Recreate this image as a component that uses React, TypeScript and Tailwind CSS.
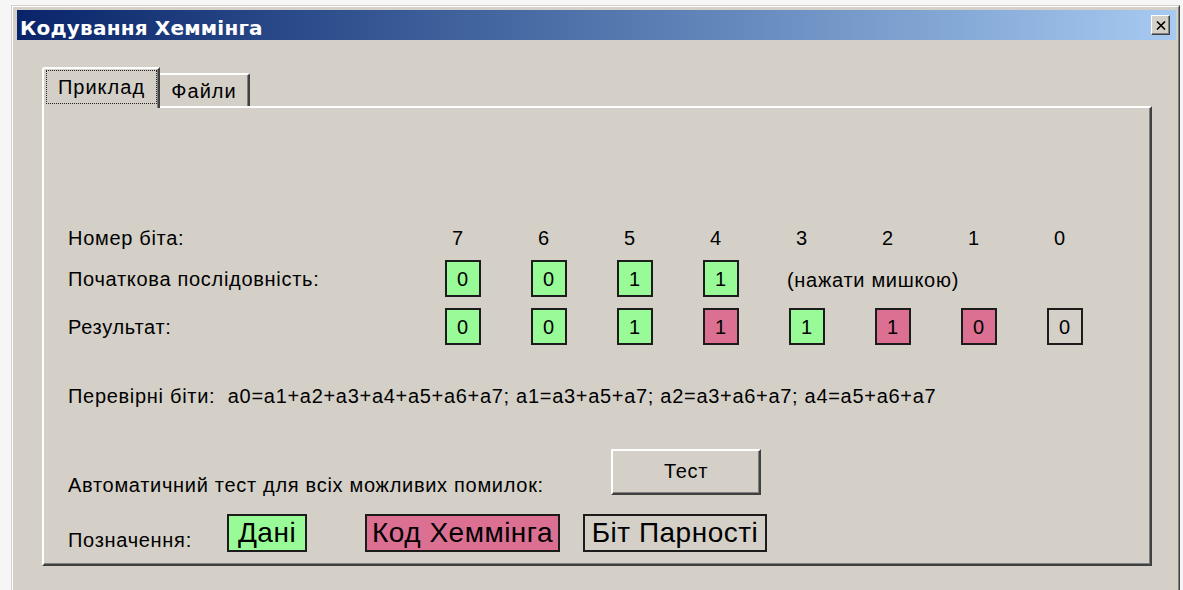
import React from "react";

type Tone = "data" | "code" | "parity";

interface Bit {
  v: string;
  tone: Tone;
}

const toneClass: Record<Tone, string> = {
  data: "bg-[#98fb98]",
  code: "bg-[#db7093]",
  parity: "bg-transparent",
};

const bitNumbers = ["7", "6", "5", "4", "3", "2", "1", "0"];

const source: Bit[] = [
  { v: "0", tone: "data" },
  { v: "0", tone: "data" },
  { v: "1", tone: "data" },
  { v: "1", tone: "data" },
];

const result: Bit[] = [
  { v: "0", tone: "data" },
  { v: "0", tone: "data" },
  { v: "1", tone: "data" },
  { v: "1", tone: "code" },
  { v: "1", tone: "data" },
  { v: "1", tone: "code" },
  { v: "0", tone: "code" },
  { v: "0", tone: "parity" },
];

const Cell = ({ bit }: { bit: Bit }) => (
  <div
    className={`w-[36px] h-[37px] border-2 border-[#1c1c1c] flex items-center justify-center text-[20px] leading-none ${toneClass[bit.tone]}`}
  >
    {bit.v}
  </div>
);

const CloseButton = () => (
  <div className="w-[19px] h-[20px] bg-[#d4d0c8] border border-t-white border-l-white border-r-[#404040] border-b-[#404040] shadow-[inset_-1px_-1px_0_#808080] flex items-center justify-center">
    <svg width="10" height="9" viewBox="0 0 10 9">
      <path d="M1 0.5 L9 8.5 M9 0.5 L1 8.5" stroke="#000" strokeWidth="1.6" />
    </svg>
  </div>
);

export default function App() {
  return (
    <div className="w-[1183px] h-[590px] bg-[#f6f6f6] pt-[5px] pl-[11px] overflow-hidden font-['Liberation_Sans',Arial,sans-serif] text-black tracking-[0.7px]">
      <div className="w-[1169px] h-[585px] bg-[#d4d0c8] border border-t-[#d4d0c8] border-l-[#d4d0c8] border-r-[#404040] border-b-0">
        <div className="h-full border-t border-l border-t-white border-l-white border-r border-r-[#808080] pl-[4px] pr-[2px] pt-[3px] flex flex-col">
          {/* caption bar */}
          <div className="h-[30px] bg-gradient-to-r from-[#0a246a] to-[#a6caf0] flex items-center justify-between pl-[3px] pr-[6px]">
            <span className="pt-[6px] text-white font-['DejaVu_Sans',sans-serif] font-bold text-[20px] tracking-[0.2px] leading-none">
              Кодування Хеммінга
            </span>
            <CloseButton />
          </div>

          {/* tabs */}
          <div className="ml-[25px] mt-[27px] h-[41px] -mb-[2px] flex items-end relative z-10">
            <div className="w-[118px] h-[41px] bg-[#d4d0c8] border-t-2 border-l-2 border-t-white border-l-white border-r-2 border-r-[#404040] shadow-[inset_-1px_0_0_#808080] rounded-tl-[3px] pt-[1px] pl-[2px] pr-[1px] pb-[4px]">
              <div className="h-full border border-dotted border-[#222] flex items-center justify-center text-[20px] leading-none tracking-[1px]">
                Приклад
              </div>
            </div>
            <div className="w-[90px] h-[33px] mb-[2px] border-t-2 border-t-white border-r-2 border-r-[#404040] shadow-[inset_-1px_0_0_#808080] rounded-tr-[2px] flex items-center justify-center text-[20px] leading-none tracking-[1px]">
              Файли
            </div>
          </div>

          {/* page */}
          <div className="ml-[25px] w-[1110px] h-[460px] border-2 border-t-white border-l-white border-r-[#404040] border-b-[#404040] shadow-[inset_-1px_-1px_0_#808080] pl-[24px] pt-[118px] flex flex-col text-[20px]">
            <div className="grid grid-cols-[377px_repeat(8,86px)] h-[24px] items-center leading-[24px]">
              <span>Номер біта:</span>
              {bitNumbers.map((n) => (
                <span key={n} className="pl-[7px]">
                  {n}
                </span>
              ))}
            </div>

            <div className="grid grid-cols-[377px_repeat(8,86px)] h-[37px] mt-[10px] items-center leading-[24px]">
              <span>Початкова послідовність:</span>
              {source.map((b, i) => (
                <Cell key={i} bit={b} />
              ))}
              <span className="col-span-4 -ml-[2px] pt-[2px]">(нажати мишкою)</span>
            </div>

            <div className="grid grid-cols-[377px_repeat(8,86px)] h-[37px] mt-[11px] items-center leading-[24px]">
              <span>Результат:</span>
              {result.map((b, i) => (
                <Cell key={i} bit={b} />
              ))}
            </div>

            <div className="h-[24px] mt-[39px] leading-[24px] whitespace-pre">
              {"Перевірні біти:  a0=a1+a2+a3+a4+a5+a6+a7; a1=a3+a5+a7; a2=a3+a6+a7; a4=a5+a6+a7"}
            </div>

            <div className="flex items-end h-[46px] mt-[41px]">
              <span className="w-[543px] leading-[24px] -mb-[2px]">
                Автоматичний тест для всіх можливих помилок:
              </span>
              <button className="w-[150px] h-[46px] bg-[#d4d0c8] border-2 border-t-white border-l-white border-r-[#404040] border-b-[#404040] shadow-[inset_-1px_-1px_0_#808080] text-[20px] leading-none pb-[2px]">
                Тест
              </button>
            </div>

            <div className="flex items-end h-[38px] mt-[19px]">
              <span className="w-[159px] leading-[24px]">Позначення:</span>
              <div className="w-[80px] h-[38px] border-2 border-[#1c1c1c] bg-[#98fb98] flex items-center justify-center text-[28px] leading-none tracking-[0.5px]">
                Дані
              </div>
              <div className="w-[195px] h-[38px] ml-[58px] border-2 border-[#1c1c1c] bg-[#db7093] flex items-center justify-center text-[28px] leading-none tracking-[0.5px]">
                Код Хеммінга
              </div>
              <div className="w-[184px] h-[38px] ml-[23px] border-2 border-[#1c1c1c] flex items-center justify-center text-[28px] leading-none tracking-[0.5px]">
                Біт Парності
              </div>
            </div>
          </div>
        </div>
      </div>
    </div>
  );
}
